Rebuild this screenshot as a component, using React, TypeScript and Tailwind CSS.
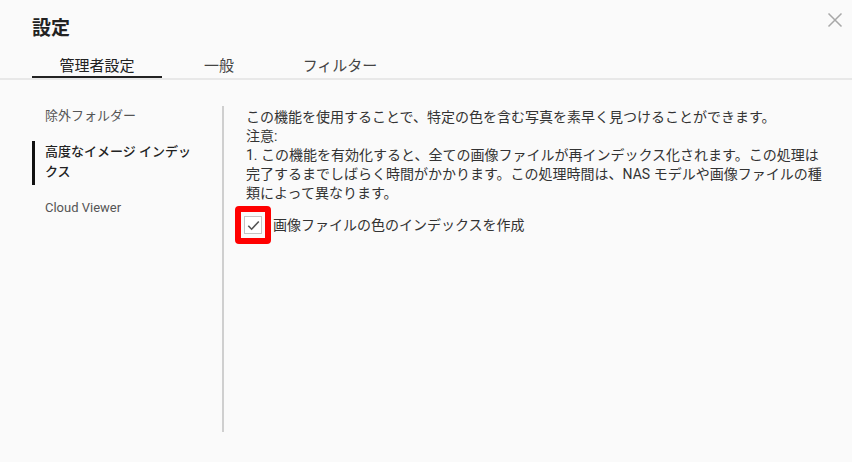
import React from "react";

export default function App() {
  const font = { fontFamily: 'Roboto, "Noto Sans CJK JP", "Liberation Sans", sans-serif' };
  return (
    <div className="relative w-[852px] h-[462px] bg-[#fafafa] text-[#333] overflow-hidden" style={font}>
      <button className="absolute right-[9px] top-[12px] w-[16px] h-[16px] flex items-center justify-center">
        <svg width="16" height="16" viewBox="0 0 16 16" fill="none" stroke="#a8a8a8" strokeWidth="1.5">
          <path d="M1.5 1.5 L14.5 14.5 M14.5 1.5 L1.5 14.5" />
        </svg>
      </button>

      <div className="pl-[32px] pt-[17px]">
        <h1 className="text-[19px] leading-[24px] font-bold text-[#222]">設定</h1>
      </div>

      <div className="mt-[11px] border-b-2 border-[#e8e8e8]">
        <div className="flex pl-[32px]">
          <div className="w-[130px] text-center text-[15px] leading-[20px] pt-[4px] border-b-2 border-[#222] text-[#222]">
            管理者設定
          </div>
          <div className="w-[114px] text-center text-[15px] leading-[20px] pt-[4px] text-[#444]">一般</div>
          <div className="w-[128px] text-center text-[15px] leading-[20px] pt-[4px] text-[#444]">フィルター</div>
        </div>
      </div>

      <div className="flex mt-[26px]">
        <div className="w-[222px] shrink-0 pl-[32px] text-[13px] leading-[20px] flex flex-col whitespace-nowrap">
          <div className="pl-[13px] text-[#555]">除外フォルダー</div>
          <div className="mt-[15px] border-l-[3px] border-[#111] pl-[10px] pt-[1px] pb-[3px] font-medium text-[#222]">
            <div>高度なイメージ インデッ</div>
            <div>クス</div>
          </div>
          <div className="mt-[13px] pl-[13px] text-[#555]">Cloud Viewer</div>
        </div>
        <div className="w-[2px] h-[326px] shrink-0 bg-[#cfcfcf]" />
        <div className="pl-[22px] pt-[2px] text-[14px] leading-[19px] text-[#333] whitespace-nowrap">
          <div>この機能を使用することで、特定の色を含む写真を素早く見つけることができます。</div>
          <div>注意:</div>
          <div>1. この機能を有効化すると、全ての画像ファイルが再インデックス化されます。この処理は</div>
          <div>完了するまでしばらく時間がかかります。この処理時間は、NAS モデルや画像ファイルの種</div>
          <div>類によって異なります。</div>
          <div className="mt-[3px] flex items-center ml-[-11px]">
            <div className="w-[36px] h-[38px] border-[6px] border-[#ff0000] rounded-[4px] flex items-center justify-center">
              <div className="w-[18px] h-[18px] border border-[#c4c4c4] bg-white flex items-center justify-center">
                <svg width="13" height="11" viewBox="0 0 13 11" fill="none" stroke="#555" strokeWidth="1.6">
                  <path d="M1.3 5.8 L4.6 9.2 L11.8 1.5" />
                </svg>
              </div>
            </div>
            <span className="ml-[2px]">画像ファイルの色のインデックスを作成</span>
          </div>
        </div>
      </div>
    </div>
  );
}
